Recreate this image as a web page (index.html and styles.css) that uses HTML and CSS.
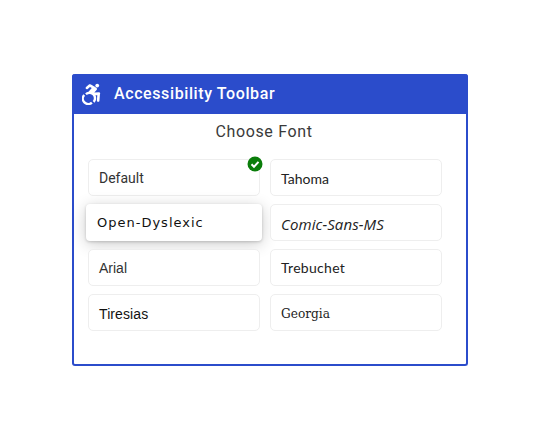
FILE: index.html
```html
<!DOCTYPE html>
<html lang="en">
<head>
<meta charset="utf-8">
<title>Accessibility Toolbar</title>
<link rel="stylesheet" href="styles.css">
</head>
<body>
<main class="page">
  <section class="panel">
    <header class="panel-head">
      <svg class="a11y-icon" viewBox="0 0 448 512" aria-hidden="true"><path d="M423.900 255.800 411 413.100c-3.300 40.700-63.900 35.100-60.600-4.900l10-122.500-41.100 2.300c10.100 20.700 15.800 43.900 15.800 68.500 0 41.200-16.100 78.700-42.300 106.500l-39.300-39.300c57.900-63.700 13.100-167.200-74-167.200-25.900 0-49.500 9.900-67.200 26L73 243.200c22-20.700 50.100-35.100 81.400-40.200l75.300-85.700-42.600-24.800-51.600 46c-30 26.800-70.600-18.500-40.500-45.400l68-60.700c9.800-8.800 24.100-10.200 35.500-3.600 0 0 139.300 80.900 139.500 81.100 16.200 10.100 20.700 30.400 10.900 45.500l-57.900 65.900 105.400-5.900c18.200-1.100 33.600 14.400 32.500 32.500z"/><circle cx="359" cy="57.300" r="44.500"/><path d="M72 300A100 100 0 0 0 213 441L252 480A155 155 0 0 1 33 261Z"/></svg>
      <h1 class="panel-title">Accessibility Toolbar</h1>
    </header>
    <div class="panel-body">
      <h2 class="section-title">Choose Font</h2>
      <div class="font-grid">
        <button class="font-card f-default">Default
          <span class="check"><svg viewBox="0 0 16 16" aria-hidden="true"><circle cx="8" cy="8" r="7.500" class="check-bg"/><path d="M4.500 8.300 7 10.800l4.500-5" class="check-mark"/></svg></span>
        </button>
        <button class="font-card f-tahoma">Tahoma</button>
        <button class="font-card font-card-raised f-dyslexic">Open-Dyslexic</button>
        <button class="font-card f-comic">Comic-Sans-MS</button>
        <button class="font-card f-arial">Arial</button>
        <button class="font-card f-trebuchet">Trebuchet</button>
        <button class="font-card f-tiresias">Tiresias</button>
        <button class="font-card f-georgia">Georgia</button>
      </div>
    </div>
  </section>
</main>
</body>
</html>
```
FILE: styles.css
```css
* { box-sizing: border-box; }
html, body { margin: 0; background: #fff; }
.page {
  display: flex;
  justify-content: center;
  padding-top: 74px;
  font-family: Roboto, sans-serif;
}
.panel {
  width: 396px;
  height: 292px;
  border: 2px solid #2b4ccb;
  border-top: 0;
  border-radius: 3px;
}
.panel-head {
  height: 40px;
  margin: 0 -2px;
  padding-left: 10px;
  display: flex;
  align-items: center;
  gap: 13px;
  background: #2b4ccb;
  border-radius: 3px 3px 0 0;
  color: #fff;
}
.a11y-icon { width: 19px; height: 22px; fill: #fff; }
.panel-title { margin: 0 0 2px; font-size: 16px; font-weight: 500; letter-spacing: .6px; }
.panel-body { padding: 8px 14px 0; }
.section-title {
  margin: 0 0 17px;
  padding-right: 12px;
  text-align: center;
  font-size: 16px;
  line-height: 20px;
  font-weight: 400;
  letter-spacing: .65px;
  color: #3a3a3a;
}
.font-grid {
  display: grid;
  grid-template-columns: 172px 172px;
  grid-auto-rows: 37px;
  column-gap: 10px;
  row-gap: 8px;
}
.font-card {
  position: relative;
  padding: 0 0 0 10px;
  background: #fff;
  border: 1px solid #eeeeee;
  border-radius: 5px;
  text-align: left;
  font-size: 14px;
  color: #333;
}
.font-card-raised {
  margin: 0 -2px;
  border: 0;
  border-radius: 4px;
  padding-left: 11px;
  box-shadow: 0 3px 16px rgba(0,0,0,.2), 0 1px 3px rgba(0,0,0,.18);
}
.check { position: absolute; top: -4px; right: -4px; width: 16px; height: 16px; }
.check svg { display: block; width: 16px; height: 16px; }
.check-bg { fill: #0a7d0a; }
.check-mark { fill: none; stroke: #fff; stroke-width: 2; }
.f-default { font-family: Roboto, sans-serif; }
.f-tahoma { font-family: Lato, sans-serif; font-size: 14px; padding-top: 2px; color: #222; }
.f-dyslexic { font-family: "DejaVu Sans", sans-serif; font-size: 13px; letter-spacing: 1px; color: #111; }
.f-comic { font-family: "Open Sans", sans-serif; font-style: italic; font-size: 15px; letter-spacing: .1px; padding-top: 3px; color: #222; }
.f-arial { font-family: "Liberation Sans", sans-serif; }
.f-trebuchet { font-family: Lato, sans-serif; font-size: 14px; letter-spacing: .3px; color: #222; }
.f-tiresias { font-family: "Liberation Sans", sans-serif; letter-spacing: .1px; padding-top: 2px; color: #111; }
.f-georgia { font-family: "DejaVu Serif Condensed", "DejaVu Serif", serif; font-size: 13.500px; color: #222; }
```
